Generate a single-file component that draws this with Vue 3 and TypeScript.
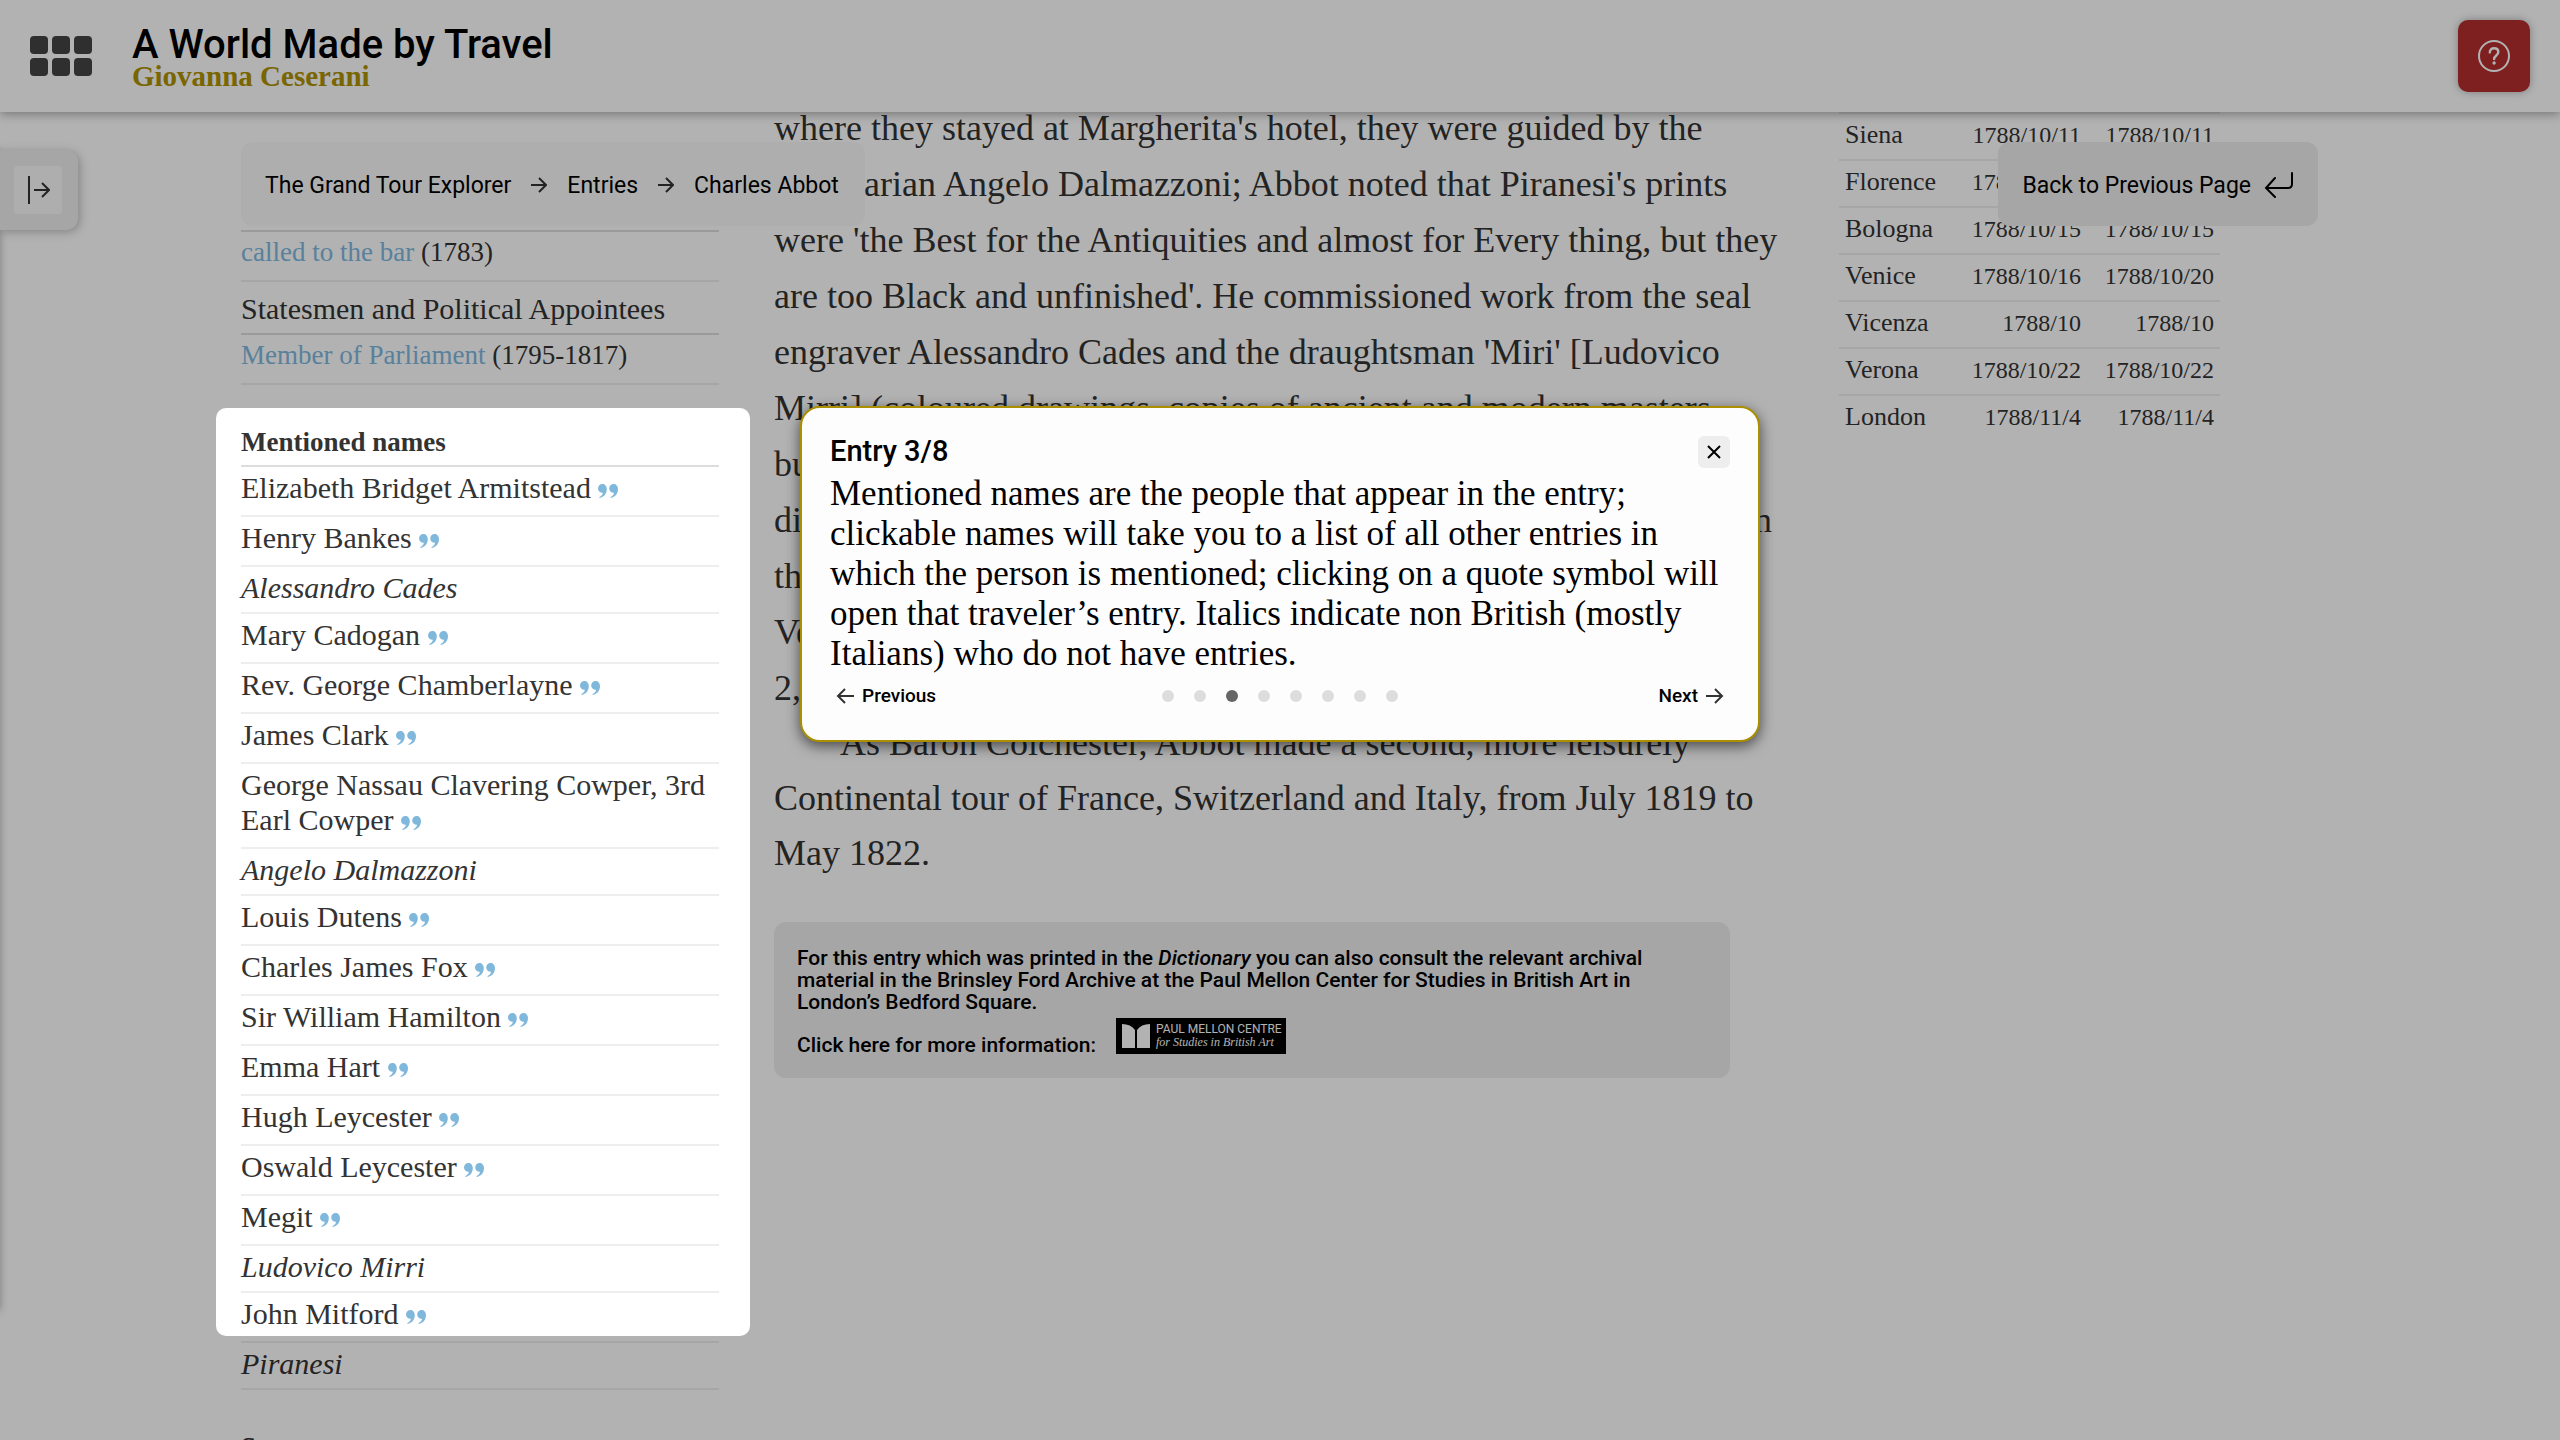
<script setup lang="ts">
interface Person {
  name: string
  traveler: boolean
}

interface Stop {
  place: string
  from: string
  to: string
}

const people: Person[] = [
  { name: 'Elizabeth Bridget Armitstead', traveler: true },
  { name: 'Henry Bankes', traveler: true },
  { name: 'Alessandro Cades', traveler: false },
  { name: 'Mary Cadogan', traveler: true },
  { name: 'Rev. George Chamberlayne', traveler: true },
  { name: 'James Clark', traveler: true },
  { name: 'George Nassau Clavering Cowper, 3rd Earl Cowper', traveler: true },
  { name: 'Angelo Dalmazzoni', traveler: false },
  { name: 'Louis Dutens', traveler: true },
  { name: 'Charles James Fox', traveler: true },
  { name: 'Sir William Hamilton', traveler: true },
  { name: 'Emma Hart', traveler: true },
  { name: 'Hugh Leycester', traveler: true },
  { name: 'Oswald Leycester', traveler: true },
  { name: 'Megit', traveler: true },
  { name: 'Ludovico Mirri', traveler: false },
  { name: 'John Mitford', traveler: true },
  { name: 'Piranesi', traveler: false },
]

const stops: Stop[] = [
  { place: 'Siena', from: '1788/10/11', to: '1788/10/11' },
  { place: 'Florence', from: '1788/10/13', to: '1788/10/13' },
  { place: 'Bologna', from: '1788/10/15', to: '1788/10/15' },
  { place: 'Venice', from: '1788/10/16', to: '1788/10/20' },
  { place: 'Vicenza', from: '1788/10', to: '1788/10' },
  { place: 'Verona', from: '1788/10/22', to: '1788/10/22' },
  { place: 'London', from: '1788/11/4', to: '1788/11/4' },
]

const tourSteps = 8
const currentStep = 3
</script>

<template>
  <div class="page">
    <header class="topbar">
      <button class="menu" type="button" aria-label="Menu">
        <span v-for="n in 6" :key="n" class="menu-cell"></span>
      </button>
      <div class="brand">
        <a class="brand-title" href="#">A World Made by Travel</a>
        <a class="brand-author" href="#">Giovanna Ceserani</a>
      </div>
      <button class="help" type="button" aria-label="Help">
        <svg width="32" height="32" viewBox="0 0 32 32" fill="none" stroke="#fff" stroke-width="2">
          <circle cx="16" cy="16" r="15" />
          <path d="M11.8 12.4c0-2.6 1.8-4.2 4.3-4.2s4.2 1.6 4.2 3.9c0 3.4-4.2 3.4-4.2 7" stroke-width="2.4" stroke-linecap="round" />
          <circle cx="16.1" cy="23" r="1.7" fill="#fff" stroke="none" />
        </svg>
      </button>
    </header>

    <aside class="drawer">
      <div class="drawer-tab">
        <button type="button" class="drawer-open" aria-label="Open panel">
          <svg width="24" height="28" viewBox="0 0 24 28" fill="none" stroke="#333" stroke-width="2">
            <path d="M3 0v28M8 14h15M16 7l7 7-7 7" />
          </svg>
        </button>
      </div>
    </aside>

    <nav class="crumbs">
      <a href="#">The Grand Tour Explorer</a>
      <svg width="16" height="16" viewBox="0 0 16 16" fill="none" stroke="#333" stroke-width="2"><path d="M0 8h15M8 1l7 7-7 7" /></svg>
      <a href="#">Entries</a>
      <svg width="16" height="16" viewBox="0 0 16 16" fill="none" stroke="#333" stroke-width="2"><path d="M0 8h15M8 1l7 7-7 7" /></svg>
      <a href="#">Charles Abbot</a>
    </nav>

    <button class="back" type="button">
      Back to Previous Page
      <svg width="30" height="26" viewBox="0 0 30 26" fill="none" stroke="#000" stroke-width="2" stroke-linecap="round">
        <path d="M28 1v11q0 4-4 4H2M11 6L2 16l9 9" />
      </svg>
    </button>

    <main class="columns">
      <section class="facts">
        <ul class="rows rows-top">
          <li class="row quoted fact"><a class="fact-link" href="#">called to the bar</a> (1783)</li>
        </ul>
        <h3 class="group">Statesmen and Political Appointees</h3>
        <ul class="rows">
          <li class="row quoted fact"><a class="fact-link" href="#">Member of Parliament</a> (1795-1817)</li>
        </ul>
        <h2 class="heading">Mentioned names</h2>
        <ul class="rows">
          <li v-for="p in people" :key="p.name" class="row" :class="p.traveler ? 'quoted' : 'local'">
            <a class="person" href="#">{{ p.name }}</a>
            <template v-if="p.traveler">{{ ' ' }}<a class="quote" href="#" :aria-label="'Entry of ' + p.name"><svg width="20" height="14" viewBox="0 0 20 14" fill="#80b8dc"><path d="M4.4 0C6.8 0 8.8 2 8.8 5.2C8.8 9.6 6 13 1.6 14L1.2 13.2C3.4 12.2 4.6 10.8 4.8 8.8C2.2 9 0 7.2 0 4.5C0 2 2 0 4.4 0Z" /><path transform="translate(11.2 0)" d="M4.4 0C6.8 0 8.8 2 8.8 5.2C8.8 9.6 6 13 1.6 14L1.2 13.2C3.4 12.2 4.6 10.8 4.8 8.8C2.2 9 0 7.2 0 4.5C0 2 2 0 4.4 0Z" /></svg></a></template>
          </li>
        </ul>
        <h2 class="heading">Sources</h2>
      </section>

      <article class="entry">
        <p>
          where they stayed at Margherita's hotel, they were guided by the<br />
          antiquarian Angelo Dalmazzoni; Abbot noted that Piranesi's prints<br />
          were 'the Best for the Antiquities and almost for Every thing, but they<br />
          are too Black and unfinished'. He commissioned work from the seal<br />
          engraver Alessandro Cades and the draughtsman 'Miri' [Ludovico<br />
          Mirri] (coloured drawings, copies of ancient and modern masters,<br />
          bu<br />
          <span class="spread"><span>di</span><span>n</span></span>
          th<br />
          Ve<br />
          2,
        </p>
        <p class="indent">
          As Baron Colchester, Abbot made a second, more leisurely<br />
          Continental tour of France, Switzerland and Italy, from July 1819 to<br />
          May 1822.
        </p>
        <div class="note">
          <p>
            For this entry which was printed in the <em>Dictionary</em> you can also consult the relevant archival<br />
            material in the Brinsley Ford Archive at the Paul Mellon Center for Studies in British Art in<br />
            London’s Bedford Square.
          </p>
          <div class="note-more">
            <span class="note-label">Click here for more information:</span>
            <a class="mellon" href="#">
              <svg width="28" height="24" viewBox="0 0 28 24" fill="#fff"><path d="M0 0Q9 0 13 6V24H0ZM28 0Q19 0 15 6V24H28Z" /></svg>
              <span class="mellon-text">
                <span class="mellon-name">PAUL MELLON CENTRE</span>
                <span class="mellon-sub">for Studies in British Art</span>
              </span>
            </a>
          </div>
        </div>
      </article>

      <table class="stops">
        <tbody>
          <tr v-for="s in stops" :key="s.place">
            <th scope="row">{{ s.place }}</th>
            <td>{{ s.from }}</td>
            <td>{{ s.to }}</td>
          </tr>
        </tbody>
      </table>
    </main>

    <div class="spotlight"></div>

    <div class="popover" role="dialog" aria-labelledby="tour-title">
      <div class="popover-head">
        <h2 id="tour-title">Entry {{ currentStep }}/{{ tourSteps }}</h2>
        <button class="close" type="button" aria-label="Close">
          <svg width="14" height="14" viewBox="0 0 14 14" stroke="#000" stroke-width="2"><path d="M1 1l12 12M13 1L1 13" /></svg>
        </button>
      </div>
      <p class="popover-text">
        Mentioned names are the people that appear in the entry;<br />
        clickable names will take you to a list of all other entries in<br />
        which the person is mentioned; clicking on a quote symbol will<br />
        open that traveler’s entry. Italics indicate non British (mostly<br />
        Italians) who do not have entries.
      </p>
      <div class="popover-foot">
        <button class="step" type="button">
          <svg width="18" height="16" viewBox="0 0 18 16" fill="none" stroke="#333" stroke-width="2"><path d="M18 8H2M9 1L2 8l7 7" /></svg>
          Previous
        </button>
        <div class="dots">
          <span v-for="n in tourSteps" :key="n" class="dot" :class="{ on: n === currentStep }"></span>
        </div>
        <button class="step step-next" type="button">
          Next
          <svg width="18" height="16" viewBox="0 0 18 16" fill="none" stroke="#333" stroke-width="2"><path d="M0 8h16M9 1l7 7-7 7" /></svg>
        </button>
      </div>
    </div>
  </div>
</template>

<style>
body {
  margin: 0;
  background: #fff;
}
</style>

<style scoped>
.page {
  position: relative;
  height: 100vh;
  overflow: hidden;
  background: #fff;
  color: #333;
  font-family: "Liberation Serif", serif;
}

button {
  border: 0;
  padding: 0;
  background: none;
  color: #000;
  font-family: Roboto, "Liberation Sans", sans-serif;
  cursor: pointer;
}

a {
  color: inherit;
  text-decoration: none;
}

h2, h3, p, ul {
  margin: 0;
  padding: 0;
}

svg {
  flex: none;
}

.topbar {
  position: relative;
  z-index: 3;
  display: flex;
  align-items: center;
  height: 112px;
  padding: 0 30px;
  box-sizing: border-box;
  background: #fff;
  box-shadow: 0 2px 10px rgba(0, 0, 0, 0.35);
}

.menu {
  display: grid;
  grid-template-columns: repeat(3, 18px);
  gap: 4px;
}

.menu-cell {
  height: 18px;
  border-radius: 4px;
  background: #444;
}

.brand {
  flex: 1;
  display: flex;
  flex-direction: column;
  margin-left: 40px;
}

.brand-title {
  font: 500 40px/40px Roboto, sans-serif;
  color: #000;
}

.brand-author {
  font-size: 29px;
  line-height: 22px;
  font-weight: bold;
  color: #ae9200;
}

.help {
  display: flex;
  align-items: center;
  justify-content: center;
  width: 72px;
  height: 72px;
  border-radius: 10px;
  background: #b62e2e;
  box-shadow: 0 0 8px rgba(0, 0, 0, 0.3);
}

.drawer {
  position: absolute;
  z-index: 2;
  left: -10px;
  top: 150px;
  bottom: 130px;
  width: 10px;
  box-shadow: 0 0 8px rgba(0, 0, 0, 0.3);
}

.drawer-tab {
  position: absolute;
  left: 10px;
  top: 0;
  padding: 16px 16px 16px 14px;
  border-radius: 0 12px 12px 0;
  background: #eee;
  box-shadow: 2px 2px 10px rgba(0, 0, 0, 0.25);
}

.drawer-open {
  display: flex;
  align-items: center;
  justify-content: center;
  width: 48px;
  height: 48px;
  border-radius: 4px;
  background: #fafafa;
}

.crumbs,
.back {
  position: absolute;
  z-index: 2;
  top: 142px;
  display: flex;
  align-items: center;
  height: 84px;
  box-sizing: border-box;
  border-radius: 12px;
  font-family: Roboto, sans-serif;
  font-size: 23px;
  color: #000;
  white-space: nowrap;
}

.crumbs {
  left: 241px;
  gap: 20px;
  padding: 2px 26px 0 24px;
  background: #fafafa;
}

.back {
  right: 242px;
  gap: 13px;
  padding: 2px 24px 0;
  background: #eee;
}

.columns {
  display: grid;
  grid-template-columns: 478fr 1010fr 381fr;
  column-gap: 55px;
  align-items: start;
  margin-top: -14px;
  padding: 0 340px 0 241px;
}

.facts {
  padding-top: 132px;
  font-size: 30px;
  line-height: 35px;
}

.rows {
  list-style: none;
}

.rows-top {
  border-top: 2px solid #ddd;
}

.row {
  padding-top: 3px;
  border-bottom: 2px solid #eee;
}

.quoted {
  padding-bottom: 10px;
}

.local {
  padding-bottom: 7px;
  font-style: italic;
}

.fact {
  font-size: 27px;
}

.fact-link {
  color: #80b8e0;
}

.group {
  padding: 9px 0 7px;
  border-bottom: 2px solid #ddd;
  font-size: 30px;
  font-weight: normal;
}

.heading {
  padding: 40px 0 5px;
  border-bottom: 2px solid #ddd;
  font-size: 27px;
}

.entry {
  padding-top: 2px;
  font-size: 36px;
  line-height: 56px;
  white-space: nowrap;
}

.indent {
  line-height: 55px;
  text-indent: 66px;
}

.spread {
  display: flex;
  justify-content: space-between;
  padding-right: 12px;
}

.note {
  max-width: 956px;
  box-sizing: border-box;
  margin-top: 41px;
  padding: 25px 23px 24px;
  border-radius: 12px;
  background: #eee;
  color: #000;
  font: 500 21px/22px Roboto, sans-serif;
}

.note-more {
  display: flex;
  align-items: flex-end;
  gap: 20px;
  margin-top: 5px;
}

.note-label {
  line-height: 18px;
}

.mellon {
  display: flex;
  align-items: center;
  gap: 6px;
  width: 170px;
  height: 36px;
  padding: 0 6px;
  box-sizing: border-box;
  background: #000;
  color: #fff;
}

.mellon-text {
  display: flex;
  flex-direction: column;
}

.mellon-name {
  font: 12px/13px Roboto, sans-serif;
}

.mellon-sub {
  font: italic 12px/13px "Liberation Serif", serif;
}

.stops {
  width: 100%;
  margin-top: 14px;
  border-collapse: collapse;
  font-size: 24px;
  line-height: 30px;
}

.stops tr {
  height: 47px;
  border-top: 2px solid #eee;
}

.stops th {
  padding: 0 6px 4px;
  font-size: 26px;
  font-weight: normal;
  text-align: left;
}

.stops td {
  width: 121px;
  padding: 0 6px 4px;
  text-align: right;
}

.spotlight {
  position: absolute;
  z-index: 4;
  left: 216px;
  top: 408px;
  width: 534px;
  height: 928px;
  border-radius: 10px;
  box-shadow: 0 0 0 9999px rgba(0, 0, 0, 0.3);
  pointer-events: none;
}

.popover {
  position: absolute;
  z-index: 5;
  left: 800px;
  top: 406px;
  width: 960px;
  box-sizing: border-box;
  padding: 26px 28px 30px;
  border: 2px solid #ab8f00;
  border-radius: 20px;
  background: #fdfdfd;
  color: #000;
  box-shadow: 0 4px 14px rgba(0, 0, 0, 0.6);
}

.popover-head {
  display: flex;
  align-items: center;
  justify-content: space-between;
}

.popover-head h2 {
  padding-bottom: 2px;
  font: 500 29px/34px Roboto, sans-serif;
}

.close {
  display: flex;
  align-items: center;
  justify-content: center;
  width: 32px;
  height: 32px;
  border-radius: 6px;
  background: #eee;
}

.popover-text {
  margin-top: 4px;
  font-size: 35px;
  line-height: 40px;
  white-space: nowrap;
}

.popover-foot {
  display: grid;
  grid-template-columns: 1fr auto 1fr;
  align-items: center;
  margin-top: 8px;
  padding: 0 6px;
}

.step {
  display: flex;
  align-items: center;
  gap: 8px;
  font-size: 19px;
  font-weight: 500;
  line-height: 28px;
}

.step-next {
  justify-self: end;
}

.dots {
  display: flex;
  gap: 20px;
}

.dot {
  width: 12px;
  height: 12px;
  border-radius: 50%;
  background: #ddd;
}

.dot.on {
  background: #666;
}
</style>
